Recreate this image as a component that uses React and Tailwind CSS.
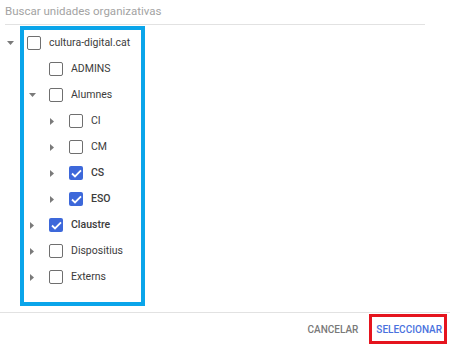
import React from "react";

const nodes = [
  { label: "cultura-digital.cat", level: 0, caret: "down", checked: false },
  { label: "ADMINS", level: 1, caret: null, checked: false },
  { label: "Alumnes", level: 1, caret: "down", checked: false },
  { label: "CI", level: 2, caret: "right", checked: false },
  { label: "CM", level: 2, caret: "right", checked: false },
  { label: "CS", level: 2, caret: "right", checked: true },
  { label: "ESO", level: 2, caret: "right", checked: true },
  { label: "Claustre", level: 1, caret: "right", checked: true },
  { label: "Dispositius", level: 1, caret: "right", checked: false },
  { label: "Externs", level: 1, caret: "right", checked: false },
];

function Caret({ dir }) {
  if (!dir) return <span className="w-[8px] shrink-0" />;
  return (
    <span className="w-[8px] shrink-0 flex items-center justify-center">
      {dir === "down" ? (
        <svg width="7" height="4" viewBox="0 0 7 4">
          <path d="M0 0 L7 0 L3.5 4 Z" fill="#7a7a7a" />
        </svg>
      ) : (
        <svg width="4" height="7" viewBox="0 0 4 7">
          <path d="M0 0 L4 3.5 L0 7 Z" fill="#7a7a7a" />
        </svg>
      )}
    </span>
  );
}

function Checkbox({ checked }) {
  if (checked) {
    return (
      <span className="block w-[14px] h-[14px] rounded-[2px] bg-[#3d68da] flex items-center justify-center">
        <svg width="11" height="9" viewBox="0 0 11 9">
          <path d="M1 4.5 L4 7.5 L10 1.3" fill="none" stroke="#fff" strokeWidth="1.8" />
        </svg>
      </span>
    );
  }
  return <span className="block w-[14px] h-[14px] rounded-[2px] border-[1.5px] border-[#6f6f6f] bg-white" />;
}

export default function App() {
  return (
    <div className="relative w-[450px] h-[346px] bg-white flex flex-col font-['Roboto',sans-serif]">
      <div className="mx-[5px] w-[420px] h-[25px] border-b border-[#e2e2e2] flex items-end pb-[4px] text-[11.5px] text-[#a3a3a3]">
        Buscar unidades organizativas
      </div>

      <div className="mt-[5px] flex flex-col">
        {nodes.map((n, i) => (
          <div
            key={i}
            className={
              "h-[26px] flex items-center " +
              (n.level === 0 ? "pl-[6px]" : n.level === 1 ? "pl-[28px]" : "pl-[48px]")
            }
          >
            <Caret dir={n.caret} />
            <span className="ml-[13px] flex shrink-0">
              <Checkbox checked={n.checked} />
            </span>
            <span
              className={
                "ml-[8px] text-[10.5px] text-[#3c3c3c] " + (n.checked ? "font-medium" : "")
              }
            >
              {n.label}
            </span>
          </div>
        ))}
      </div>

      <div className="flex-1" />

      <div className="h-[34px] border-t border-[#e2e2e2] flex items-center justify-end pr-[8px] gap-[18px] text-[10px] font-medium">
        <button className="text-[#7a7a7a]">CANCELAR</button>
        <button className="text-[#4a72de]">SELECCIONAR</button>
      </div>

      <div className="absolute left-[20px] top-[26px] w-[125px] h-[280px] border-4 border-[#0aa5ea] pointer-events-none" />
      <div className="absolute left-[369px] top-[314px] w-[78px] h-[30px] border-[3px] border-[#e5141e] pointer-events-none" />
    </div>
  );
}
